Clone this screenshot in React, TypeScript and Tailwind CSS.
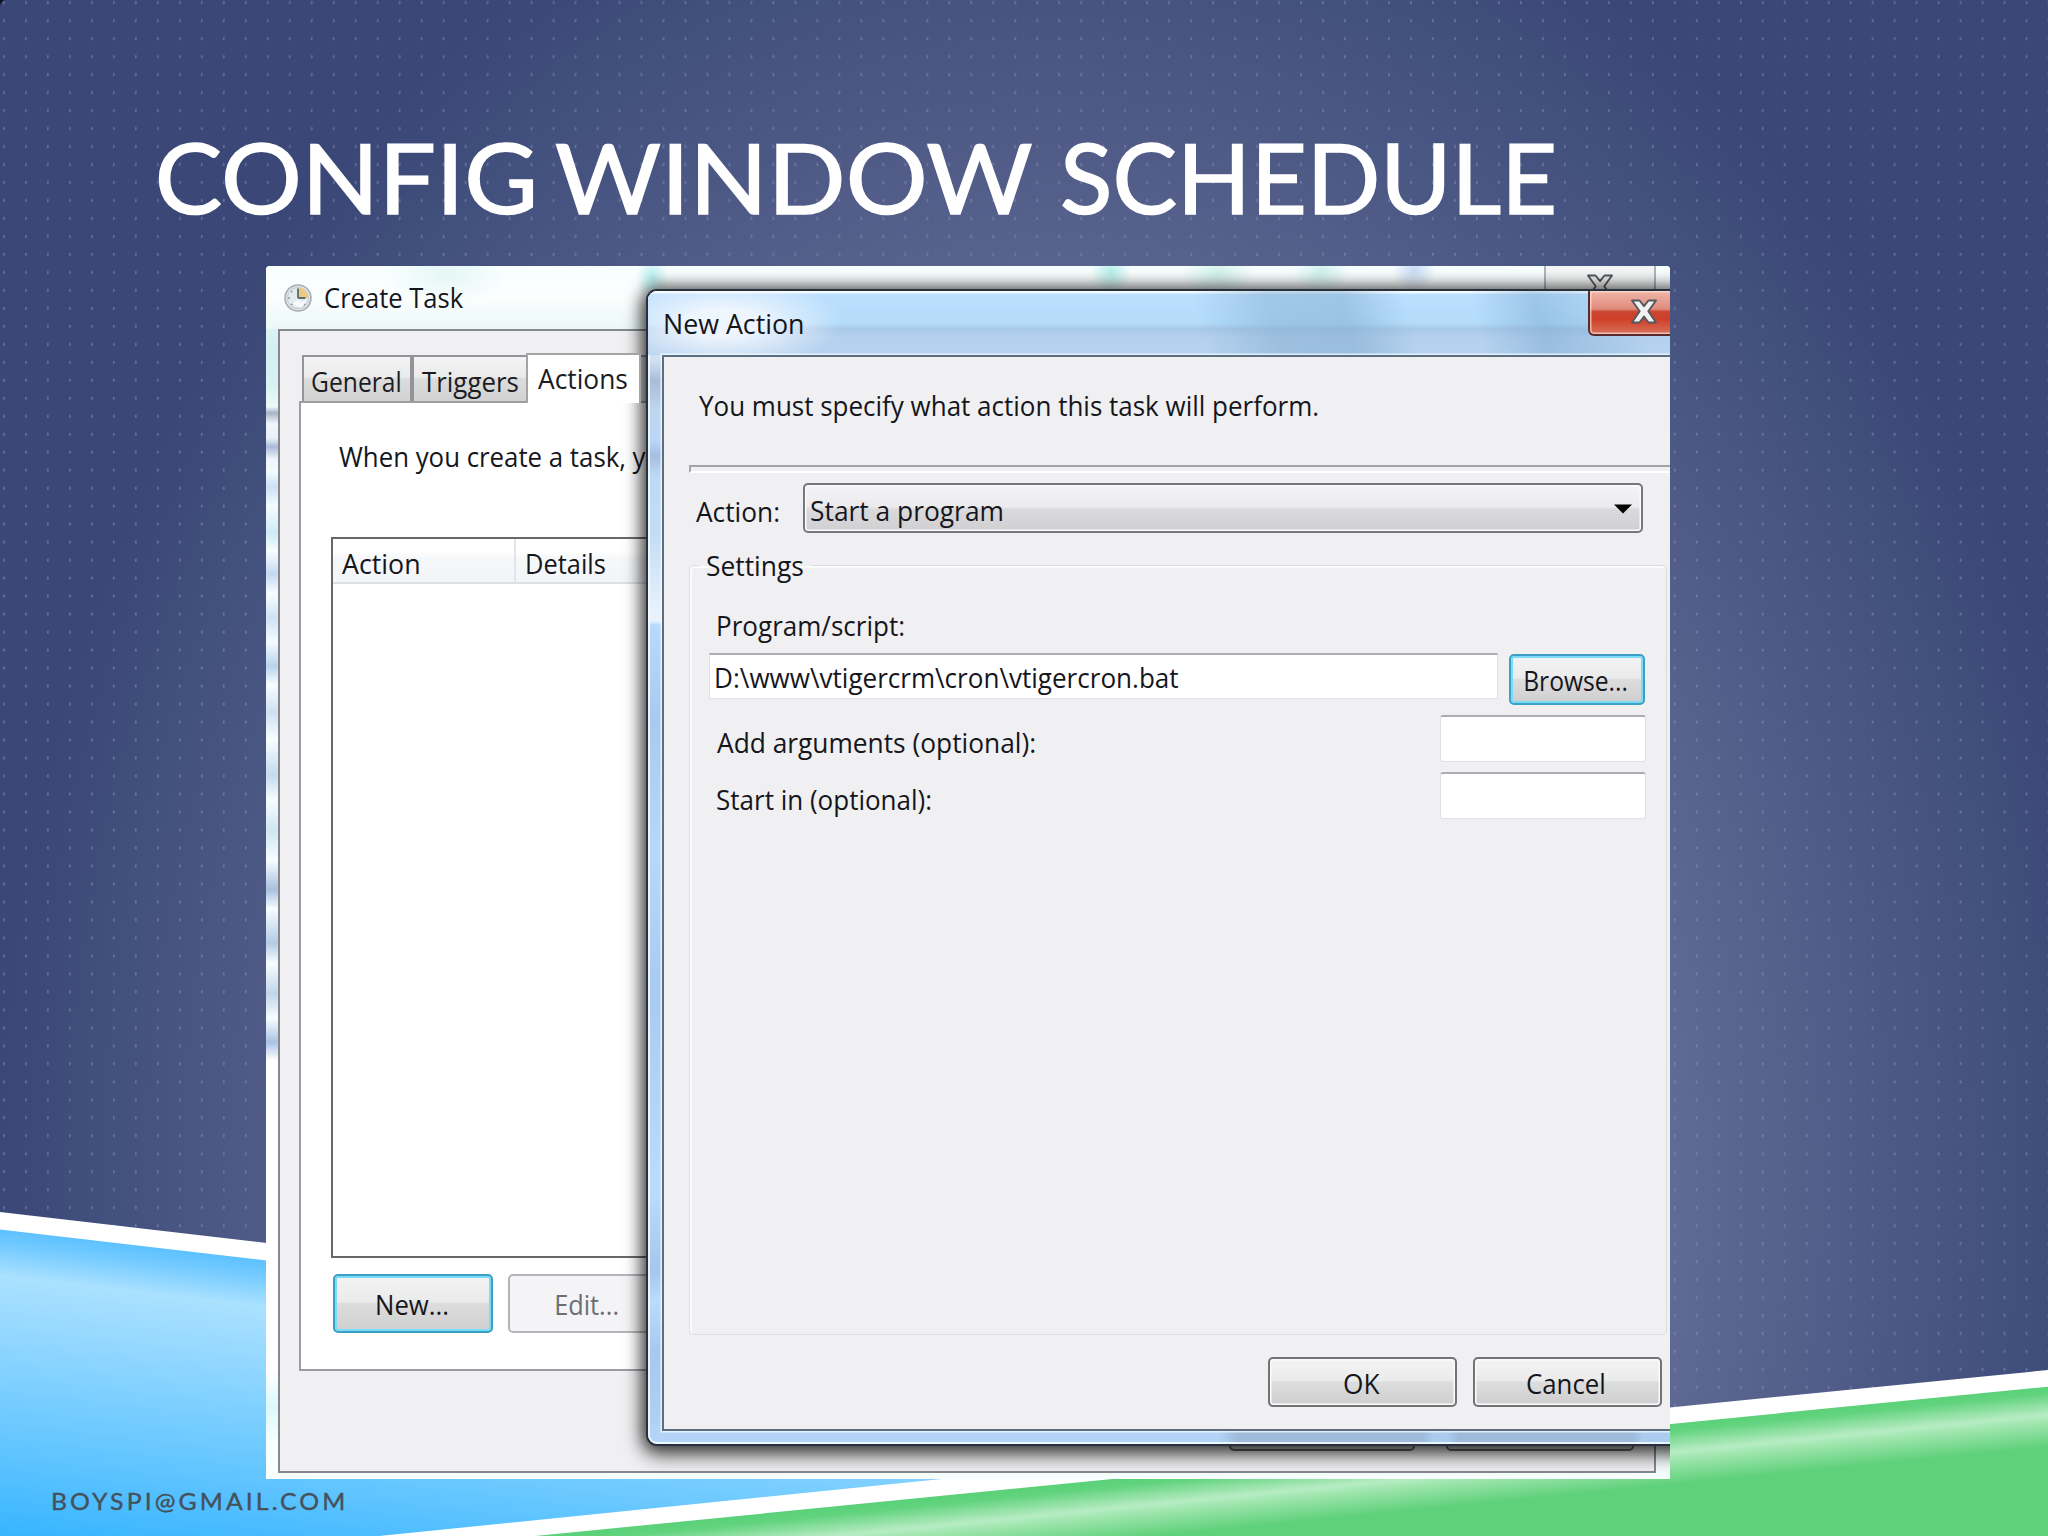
import { useLayoutEffect, useRef, type ReactNode } from "react";

/** Single line of text whose ink is fitted to an exact width, starting at the box's left edge. */
function Fit({ w, children, className = "" }: { w: number; children: string; className?: string }) {
  const ref = useRef<HTMLSpanElement>(null);
  useLayoutEffect(() => {
    const el = ref.current;
    const ctx = document.createElement("canvas").getContext("2d");
    if (!el || !ctx) return;
    const cs = getComputedStyle(el);
    ctx.font = `${cs.fontWeight} ${cs.fontSize} ${cs.fontFamily}`;
    if (cs.letterSpacing !== "normal") {
      (ctx as unknown as { letterSpacing: string }).letterSpacing = cs.letterSpacing;
    }
    const m = ctx.measureText(children);
    const scale = w / (m.actualBoundingBoxRight + m.actualBoundingBoxLeft);
    el.style.transform = `translate(${m.actualBoundingBoxLeft * scale}px, 1px) scaleX(${scale})`;
  }, [w, children]);
  return (
    <span className={`block shrink-0 whitespace-nowrap ${className}`} style={{ width: w }}>
      <span ref={ref} className="inline-block origin-left align-top">
        {children}
      </span>
    </span>
  );
}

function Backdrop() {
  return (
    <svg className="absolute inset-0 h-full w-full" viewBox="0 0 2048 1536">
      <defs>
        <radialGradient id="navy" gradientUnits="userSpaceOnUse" cx="0" cy="0" r="1" gradientTransform="translate(1060 1180) scale(1060 1380)">
          <stop offset="0" stopColor="#6a769c" />
          <stop offset="0.58" stopColor="#5f6b94" />
          <stop offset="0.75" stopColor="#505b87" />
          <stop offset="0.9" stopColor="#42507d" />
          <stop offset="1" stopColor="#3a4777" />
        </radialGradient>
        <pattern id="dots" patternUnits="userSpaceOnUse" x="0" y="0.5" width="21.985" height="17.985">
          <rect x="3" y="0.5" width="1.8" height="3.2" rx="0.9" fill="#8f9cc0" opacity="0.5" />
        </pattern>
        <linearGradient id="sky" gradientUnits="userSpaceOnUse" x1="0" y1="1229" x2="-36" y2="1536">
          <stop offset="0" stopColor="#5cc1ff" />
          <stop offset="0.05" stopColor="#72caff" />
          <stop offset="0.15" stopColor="#aae1ff" />
          <stop offset="0.3" stopColor="#98d9ff" />
          <stop offset="0.7" stopColor="#62c5ff" />
          <stop offset="1" stopColor="#35b4ff" />
        </linearGradient>
        <linearGradient id="leaf" gradientUnits="userSpaceOnUse" x1="1670" y1="1424" x2="1676" y2="1484">
          <stop offset="0" stopColor="#5bd179" />
          <stop offset="0.12" stopColor="#62d37e" />
          <stop offset="0.47" stopColor="#b7ecc3" />
          <stop offset="0.62" stopColor="#9be4ab" />
          <stop offset="1" stopColor="#5fd17b" />
        </linearGradient>
      </defs>
      <rect width="2048" height="1536" fill="url(#navy)" />
      <rect width="2048" height="1536" fill="url(#dots)" />
      <path d="M0 0H5Q1 1 0 6Z" fill="#10131f" />
      <path d="M0 1212L1100 1340V1464L1670 1407.5L2048 1370V1536H0Z" fill="#fff" />
      <path d="M0 1229.5L1100 1357V1463L379 1536H0Z" fill="url(#sky)" />
      <path d="M2048 1386.7L535 1536H2048Z" fill="url(#leaf)" />
    </svg>
  );
}

function ClockIcon() {
  return (
    <svg className="h-7 w-7 shrink-0" viewBox="0 0 28 28">
      <circle cx="14" cy="14" r="13" fill="#dfe6ea" stroke="#a9aeb2" strokeWidth="1.6" />
      <circle cx="14" cy="14" r="10.6" fill="#e3ebef" stroke="#c3c9cd" strokeWidth="1" />
      <path d="M14 14V3.6A10.4 10.4 0 0 1 24.4 14Z" fill="#ebcb84" />
      <path d="M14 14V4.5M14 14H21.5" stroke="#5d6b75" strokeWidth="1.8" fill="none" />
      <g stroke="#8c969d" strokeWidth="1.3">
        <path d="M4 14H6M14 22V24M6.9 6.9L8.3 8.3M6.9 21.1L8.3 19.7M21.1 21.1L19.7 19.7" />
      </g>
      <path d="M9 19L17 15L15 19L22 16Q20 23 14 24Z" fill="#fbfdfe" opacity="0.9" />
    </svg>
  );
}

function CloseGlyph({ className }: { className: string }) {
  return (
    <svg className={className} viewBox="0 0 28 25">
      <path
        d="M2 1.5H9.5L14 7.2L18.5 1.5H26L18.3 12.3L26 23.5H18.5L14 17.6L9.5 23.5H2L9.7 12.3Z"
        fill="#f1f1f2"
        stroke="#55585f"
        strokeWidth="1.9"
        strokeLinejoin="round"
      />
    </svg>
  );
}

function Button({ children, className }: { children: ReactNode; className: string }) {
  return (
    <div className={`flex shrink-0 items-center justify-center rounded-[5px] border-2 pt-px ${className}`}>{children}</div>
  );
}

const FACE =
  "bg-[linear-gradient(180deg,#f3f3f3_0%,#ebebeb_47%,#dddddd_50%,#cfcfcf_100%)]";

function TaskWindow() {
  return (
    <div className="h-full w-full bg-[linear-gradient(90deg,transparent_0_12px,#f7fffe_13px),linear-gradient(180deg,#f4fffe_0%,#d3eff0_7%,#d9f3f3_10%,#eefafa_11.6%,#a5b3c8_12.1%,#f0f6fb_13%,#e8f0f8_14.2%,#a9bbd8_14.9%,#eef5fc_15.9%,#f2fafd_17%,#cde0f5_18.2%,#f4fcff_19.8%,#cdeaf6_22%,#f7fdff_23.5%,#c5d9f2_25.4%,#f7fdff_27%,#cfe2f5_29%,#f4fcff_31%,#b9d3ee_33%,#f7fdff_34.5%,#cfe0f2_36.8%,#f7fdff_39%,#c5dbee_42%,#f7fdff_44%,#cfe6f2_46.5%,#f7fdff_49%,#a9bfe0_51.4%,#f7fdff_53%,#b4cbe8_55.8%,#f7fdff_57.5%,#c0d5ea_60%,#f7fdff_62%,#a9c3e5_64%,#ffffff_65.5%,#ffffff_91%,#dcf8fa_94%,#f7ffff_97%)]">
      <div className="flex h-[63px] bg-[radial-gradient(ellipse_16px_24px_at_386px_12px,#b9efef,transparent),radial-gradient(ellipse_60px_30px_at_180px_8px,#e3f7f4,transparent),radial-gradient(ellipse_20px_24px_at_845px_6px,#b5efeb,transparent),radial-gradient(ellipse_36px_26px_at_952px_8px,#d2f2ec,transparent),radial-gradient(ellipse_28px_22px_at_1055px_6px,#cdf2ee,transparent),radial-gradient(ellipse_22px_22px_at_1148px_4px,#c9dcf6,transparent),linear-gradient(180deg,#f8ffff,#fbfefe_50%,#ebf8f6)] pt-[18px] pl-[18px]">
        <ClockIcon />
        <Fit w={138} className="-mt-[2px] ml-[13px]">Create Task</Fit>
        <div className="-mt-[18px] ml-[1081px] flex h-10 w-[112px] justify-center border-x-2 border-[#b0b5ba] bg-[#f4f6f6] pt-2">
          <CloseGlyph className="h-[25px] w-7" />
        </div>
      </div>
      <div className="ml-3 h-[1144px] w-[1378px] border-2 border-[#85888c] bg-[#f0eff1]">
        <div className="flex h-[70px] items-end pl-[22px] text-[#1b1c22]">
          <div className="h-[46px] w-[110px] border-2 border-b-0 border-[#929497] bg-[linear-gradient(180deg,#f4f4f5,#ebebec_45%,#dcdcdd_50%,#d2d2d3)] pt-[9px] pl-2">
            <Fit w={88}>General</Fit>
          </div>
          <div className="h-[46px] w-[114px] border-2 border-r-0 border-b-0 border-[#929497] bg-[linear-gradient(180deg,#f4f4f5,#ebebec_45%,#dcdcdd_50%,#d2d2d3)] pt-[9px] pl-2">
            <Fit w={96}>Triggers</Fit>
          </div>
          <div className="relative z-10 -mb-[2px] h-[50px] w-[115px] border-2 border-b-0 border-[#a2a4a7] bg-white pt-2 pl-[10px]">
            <Fit w={89}>Actions</Fit>
          </div>
          <div className="h-[46px] w-[90px] border-t-2 border-[#929497] bg-[#d6d6d7]" />
        </div>
        <div className="ml-[19px] h-[970px] w-[1330px] border-2 border-[#9b9da0] bg-white">
          <Fit w={307} className="mt-[38px] ml-[38px]">When you create a task, y</Fit>
          <div className="mt-[66px] ml-[30px] h-[721px] w-[1260px] border-2 border-[#67686c] bg-white">
            <div className="flex h-[45px] border-b-2 border-[#dedfe3] bg-[linear-gradient(180deg,#ffffff_30%,#f6f7f9_45%,#f4f5f8)]">
              <div className="w-[183px] border-r-2 border-[#e2e4e9] pt-[9px] pl-[9px]">
                <Fit w={77}>Action</Fit>
              </div>
              <div className="pt-[9px] pl-[11px]">
                <Fit w={78}>Details</Fit>
              </div>
            </div>
          </div>
          <div className="mt-4 ml-8 flex gap-[15px]">
            <Button className={`h-[59px] w-40 border-[#3b9fc6] pr-[2px] shadow-[inset_0_0_0_2px_#7adcf7] ${FACE}`}>
              <Fit w={71}>New...</Fit>
            </Button>
            <Button className="h-[59px] w-[157px] border-[#b4b5b9] bg-[#f4f3f5] text-[#6d6e73]">
              <Fit w={62}>Edit...</Fit>
            </Button>
          </div>
        </div>
        <div className="mt-[30px] ml-[949px] flex gap-[31px]">
          <div className="h-[50px] w-[186px] rounded-[5px] border-2 border-[#66686b] bg-[#d5d5d6]" />
          <div className="h-[50px] w-[188px] rounded-[5px] border-2 border-[#66686b] bg-[#d5d5d6]" />
        </div>
      </div>
    </div>
  );
}

function ActionDialog() {
  return (
    <div className="absolute top-[23px] left-[380px] h-[1157px] w-[1060px] rounded-[11px] border-2 border-[#27303b] bg-[linear-gradient(90deg,transparent_570px,#9fbbdb_590px,#9fbbdb_775px,#abcbef_785px,#abcbef_800px,#9fbbdb_810px,#9fbbdb_985px,#abcbef_995px)] bg-[#b4d4f7] bg-[position:0_1139px] bg-no-repeat shadow-[0_0_16px_3px_rgba(0,0,0,0.55),0_7px_20px_2px_rgba(0,0,0,0.55)]">
      <div className="h-full rounded-[9px] bg-[linear-gradient(180deg,#cfe1f5_0,#d3e3f4_60px,#d0e0f3_70px,#a9bcd8_90px,#bfd7f1_120px,#b9d6f5_150px,#a5bfdf_165px,#bcdaf6_185px,#c2dcf5_240px,#e8f1fb_320px,#eaf3fc_330px,#b9dafd_334px,#a9c9ee_430px,#b8d8fa_560px,#a9cbf0_700px,#bbdcfb_900px,#a7c6ec_980px,#bbdcfc_1010px,#a8c8ee_1060px,#b1cff2_1130px,transparent_1138px)] shadow-[inset_0_0_0_2px_rgba(244,251,255,0.85)]">
        <div className="flex h-16 rounded-t-[9px] bg-[radial-gradient(ellipse_120px_46px_at_75px_32px,rgba(241,247,254,0.95)_30%,transparent),linear-gradient(75deg,transparent_52%,rgba(120,165,200,0.4)_59%,rgba(120,165,200,0.45)_66%,transparent_72%,transparent_78%,rgba(110,160,200,0.4)_84%,transparent_94%),linear-gradient(180deg,#f3faff_0,#f3faff_2px,#bddfff_3px,#b4dcfa_32px,#a9c9e8_38px,#b5d0ee_46px,#b6d3f0_62px)] pl-[17px]">
          <Fit w={138} className="mt-[17px]">New Action</Fit>
          <div className="ml-[785px] flex h-[45px] w-[110px] items-center rounded-b-[6px] border-2 border-t-0 border-[#5a2a2c] bg-[linear-gradient(180deg,#f0b5a8_0%,#e08b7c_42%,#c94631_48%,#cf3f27_65%,#d9705a_100%)] pl-[40px] shadow-[inset_0_0_0_1.5px_rgba(255,225,215,0.7)]">
            <CloseGlyph className="-mt-[2px] h-[25px] w-7" />
          </div>
        </div>
        <div className="ml-[14px] h-[1076px] w-[1028px] border-2 border-[#5b6d80] bg-[#f0eff1] shadow-[0_0_0_1.5px_rgba(240,249,255,0.8)]">
          <Fit w={619} className="mt-[33px] ml-[35px]">You must specify what action this task will perform.</Fit>
          <div className="mt-[45px] ml-[25px] h-2 border-t-2 border-b-2 border-l-2 border-t-[#a4a5a8] border-b-white border-l-[#a4a5a8]" />
          <div className="mt-[10px] ml-[32px] flex h-[50px]">
            <Fit w={83} className="mt-[13px]">Action:</Fit>
            <div className="ml-[24px] flex w-[840px] justify-between rounded-[5px] border-2 border-[#77787c] bg-[linear-gradient(180deg,#f4f3f5_0%,#ebeaec_47%,#dad9db_53%,#d0cfd1_100%)] pr-[9px] pl-[6px] shadow-[inset_0_0_0_1.5px_#fbfbfc]">
              <Fit w={191} className="mt-[10px]">Start a program</Fit>
              <svg className="mt-[19px] h-[10px] w-[18px]" viewBox="0 0 18 10">
                <path d="M0 0.5H18L9 9.5Z" fill="#000" />
              </svg>
            </div>
          </div>
          <fieldset className="mt-[17px] ml-[25px] h-[785px] w-[978px] rounded-[5px] border border-[#d9dfe0] shadow-[inset_1px_1px_0_1px_#fbfbfc]">
            <legend className="ml-[9px] pr-[9px] pl-[8px]">
              <Fit w={96}>Settings</Fit>
            </legend>
            <Fit w={186} className="mt-[30px] ml-7">Program/script:</Fit>
            <div className="mt-[13px] ml-[19px] flex h-[52px] gap-[10px]">
              <div className="h-[46px] w-[789px] border border-t-2 border-[#dfe1e5] border-t-[#abadb3] bg-white pt-[7px] pl-[6px]">
                <Fit w={462}>D:\www\vtigercrm\cron\vtigercron.bat</Fit>
              </div>
              <Button className={`mt-px ml-px h-[51px] w-[136px] border-[#3b9fc6] pr-[3px] shadow-[inset_0_0_0_2px_#7adcf7] ${FACE}`}>
                <Fit w={102}>Browse...</Fit>
              </Button>
            </div>
            <div className="mt-[10px] ml-[27px] flex w-[929px] justify-between">
              <Fit w={318} className="mt-3">Add arguments (optional):</Fit>
              <div className="h-[47px] w-[206px] rounded-[3px] border border-t-2 border-[#e0e1e5] border-t-[#abadb3] bg-white" />
            </div>
            <div className="mt-[10px] ml-[27px] flex w-[929px] justify-between">
              <Fit w={214} className="mt-3">Start in (optional):</Fit>
              <div className="h-[47px] w-[206px] rounded-[3px] border border-t-2 border-[#e0e1e5] border-t-[#abadb3] bg-white" />
            </div>
          </fieldset>
          <div className="mt-[22px] ml-[604px] flex gap-4">
            <Button className={`h-[50px] w-[189px] border-[#727377] pr-px shadow-[inset_0_0_0_1.5px_#fbfbfc] ${FACE}`}>
              <Fit w={36}>OK</Fit>
            </Button>
            <Button className={`h-[50px] w-[189px] border-[#727377] pr-[5px] shadow-[inset_0_0_0_1.5px_#fbfbfc] ${FACE}`}>
              <Fit w={77}>Cancel</Fit>
            </Button>
          </div>
        </div>
      </div>
    </div>
  );
}

export default function App() {
  return (
    <main className="relative h-[1536px] w-[2048px] overflow-hidden bg-[#3f4c7c]">
      <Backdrop />
      <div className="relative flex h-full flex-col">
        <h1 className="flex h-[266px] pt-[126px] pl-[159px] font-[Lato,sans-serif] text-[97px] leading-[100px] text-white [-webkit-text-stroke:1.5px_#fff]">
          <Fit w={374}>CONFIG</Fit>
          <Fit w={475} className="ml-[23px]">WINDOW</Fit>
          <Fit w={490} className="ml-8">SCHEDULE</Fit>
        </h1>
        <section className="relative ml-[266px] h-[1213px] w-[1404px] overflow-hidden rounded-t-[4px] font-['Open_Sans','Noto_Sans',sans-serif] text-[27px] leading-[30px] text-[#15161c]">
          <TaskWindow />
          <ActionDialog />
        </section>
        <footer className="pt-[6px] pl-[53px] font-[Lato,sans-serif] text-[24px] leading-[30px] tracking-[3px] text-[#45515b] [-webkit-text-stroke:0.4px_#45515b]">
          <Fit w={291}>BOYSPI@GMAIL.COM</Fit>
        </footer>
      </div>
    </main>
  );
}
